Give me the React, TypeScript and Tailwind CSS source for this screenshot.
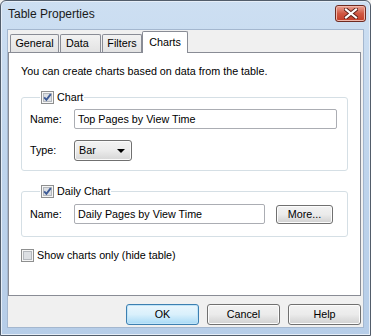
import React from 'react';

const font = "font-['Liberation_Sans',Arial,sans-serif]";

const CheckBox: React.FC<{ checked?: boolean }> = ({ checked }) => (
  <svg width="13" height="13" viewBox="0 0 13 13" className="shrink-0">
    <rect x="0.5" y="0.5" width="12" height="12" fill="#f6f6f6" stroke="#8e8f8f" />
    <rect x="2.5" y="2.5" width="8" height="8" fill="#dcdfe3" stroke="#b4b8bd" />
    {checked && (
      <path d="M3.2 6.4 L5.4 8.8 L9.8 3.2" stroke="#3d5a96" strokeWidth="1.9" fill="none" />
    )}
  </svg>
);

const Button: React.FC<{ label: string; primary?: boolean; className?: string }> = ({ label, primary, className }) => (
  <button
    className={
      'flex items-center justify-center rounded-[3px] border text-[10.75px] text-black ' +
      (primary
        ? 'border-[#3c7fb1] bg-gradient-to-b from-[#eaf6fd] via-[#d9f0fc] to-[#a7d9f5] shadow-[inset_0_0_0_1px_#c0e4f8] '
        : 'border-[#707070] bg-gradient-to-b from-[#f2f2f2] via-[#ebebeb] to-[#d0d0d0] shadow-[inset_0_0_0_1px_#fcfcfc] ') +
      (className ?? '')
    }
  >
    {label}
  </button>
);

const TextBox: React.FC<{ value: string; className?: string }> = ({ value, className }) => (
  <div className={'flex h-[20px] items-center rounded-[2px] border border-[#abadb3] bg-white pl-[3px] text-[10.75px] ' + (className ?? '')}>
    {value}
  </div>
);

const Tab: React.FC<{ label: string; className?: string }> = ({ label, className }) => (
  <div
    className={
      'flex h-[18px] items-center justify-center rounded-t-[2px] border border-b-0 border-[#898c95] bg-gradient-to-b from-[#f2f2f2] to-[#e3e3e3] text-[10.75px] ' +
      (className ?? '')
    }
  >
    {label}
  </div>
);

export default function App() {
  return (
    <div className={`${font} w-[371px] h-[336px] overflow-hidden bg-[#f0f0f0] text-black`}>
      <div className="flex h-full w-full flex-col rounded-t-[6px] border border-[#525d6b] bg-gradient-to-b from-[#cddff2] via-[#bed4ec] to-[#b6cde8] shadow-[inset_0_0_0_1px_#e6eef8]">
        {/* title bar */}
        <div className="flex h-[28px] shrink-0 items-start justify-between pl-[7px] pr-[4px]">
          <span className="mt-[6px] text-[12px] leading-[14px] text-[#1a1a1a]">Table Properties</span>
          <div className="mt-[4px] flex h-[17px] w-[31px] items-center justify-center rounded-[3px] border border-[#6e2b22] bg-gradient-to-b from-[#e9a194] via-[#d05843] to-[#c23c27] shadow-[inset_0_0_0_1px_#f0b7ab]">
            <svg width="14" height="11" viewBox="0 0 14 11">
              <path d="M2 1.5 L12 9.5 M12 1.5 L2 9.5" stroke="#5a1f18" strokeWidth="4" strokeLinecap="square" />
              <path d="M2 1.5 L12 9.5 M12 1.5 L2 9.5" stroke="#ffffff" strokeWidth="2.2" strokeLinecap="square" />
            </svg>
          </div>
        </div>

        {/* client area */}
        <div className="mx-[6px] mb-[7px] flex flex-1 flex-col border border-[#a4b7cf] bg-[#f0f0f0]">
          {/* tabs */}
          <div className="flex h-[22px] items-end pl-[2px] pt-[1px]">
            <Tab label="General" className="w-[49px]" />
            <Tab label="Data" className="ml-[1px] w-[41px] justify-start pl-[5px]" />
            <Tab label="Filters" className="ml-[1px] w-[40px]" />
            <div className="relative z-10 -mb-[1px] flex h-[22px] w-[46px] items-start justify-center rounded-t-[2px] border border-b-0 border-[#898c95] bg-white pt-[2px] text-[10.75px]">
              Charts
            </div>
          </div>

          {/* tab panel */}
          <div className="mr-[2px] flex h-[244px] flex-col border border-[#898c95] bg-white pl-[12px] pr-[12px]">
            <p className="mt-[11px] text-[10.75px] leading-[14px]">You can create charts based on data from the table.</p>

            <fieldset className="mt-[13px] rounded-[3px] border border-[#d5dfe5] pl-[8px] pr-[10px] pb-[9px]">
              <legend className="ml-[10px] flex items-center gap-[3px] px-[1px] text-[10.75px] leading-[13px]">
                <CheckBox checked />
                <span>Chart</span>
              </legend>
              <div className="mt-[5px] flex items-center">
                <span className="w-[44px] text-[10.75px]">Name:</span>
                <TextBox value="Top Pages by View Time" className="flex-1" />
              </div>
              <div className="mt-[11px] flex items-center">
                <span className="w-[44px] text-[10.75px]">Type:</span>
                <div className="flex h-[21px] w-[58px] items-center justify-between rounded-[3px] border border-[#707070] bg-gradient-to-b from-[#f2f2f2] via-[#ebebeb] to-[#d6d6d6] pl-[4px] pr-[6px] text-[10.75px] shadow-[inset_0_0_0_1px_#fafafa]">
                  <span>Bar</span>
                  <svg width="8" height="4" viewBox="0 0 8 4">
                    <path d="M0 0 H8 L4 4 Z" fill="#000" />
                  </svg>
                </div>
              </div>
            </fieldset>

            <fieldset className="mt-[14px] rounded-[3px] border border-[#d5dfe5] pl-[8px] pr-[12px] pb-[12px]">
              <legend className="ml-[10px] flex items-center gap-[3px] px-[1px] text-[10.75px] leading-[13px]">
                <CheckBox checked />
                <span>Daily Chart</span>
              </legend>
              <div className="mt-[6px] flex items-center">
                <span className="w-[44px] text-[10.75px]">Name:</span>
                <TextBox value="Daily Pages by View Time" className="w-[191px]" />
                <Button label="More..." className="ml-[11px] h-[19px] w-[57px]" />
              </div>
            </fieldset>

            <label className="mt-[10px] flex items-center gap-[3px] text-[10.75px]">
              <CheckBox />
              <span>Show charts only (hide table)</span>
            </label>
          </div>

          {/* buttons */}
          <div className="mt-[8px] flex justify-end gap-[8px] pr-[2px]">
            <Button label="OK" primary className="h-[21px] w-[73px]" />
            <Button label="Cancel" className="h-[21px] w-[73px]" />
            <Button label="Help" className="h-[21px] w-[73px]" />
          </div>
        </div>
      </div>
    </div>
  );
}
